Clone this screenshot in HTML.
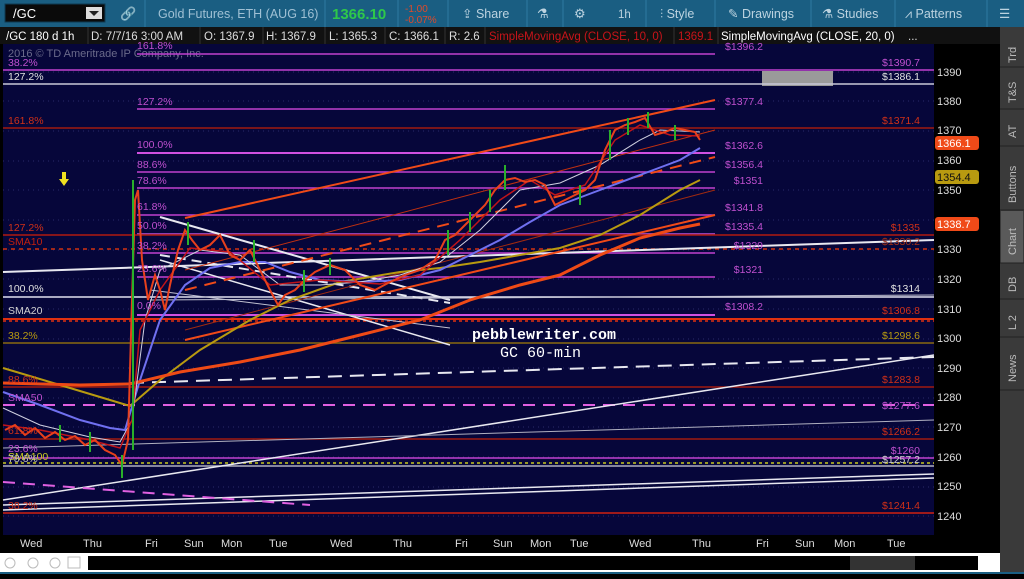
<!DOCTYPE html><html><head><style>
body{margin:0;width:1024px;height:574px;overflow:hidden;background:#000;font-family:"Liberation Sans",sans-serif}
svg text{font-family:"Liberation Sans",sans-serif}
</style></head><body>
<svg width="1024" height="574" xmlns="http://www.w3.org/2000/svg">
<!-- toolbar -->
<rect x="0" y="0" width="1024" height="27" fill="#1a5e82"/>
<rect x="5" y="4" width="100" height="18" fill="#0a0a0a" stroke="#0d3a52"/>
<text x="13" y="18" font-size="13" fill="#fff">/GC</text>
<rect x="86" y="7" width="16" height="12" fill="#ddd"/><path d="M89 11h10l-5 5z" fill="#222"/>
<text x="120" y="18" font-size="13" fill="#9fc0d4">🔗</text>
<g stroke="#2d7aa3"><line x1="145" y1="0" x2="145" y2="27"/><line x1="325" y1="0" x2="325" y2="27"/><line x1="398" y1="0" x2="398" y2="27"/><line x1="448" y1="0" x2="448" y2="27"/><line x1="527" y1="0" x2="527" y2="27"/><line x1="563" y1="0" x2="563" y2="27"/><line x1="646" y1="0" x2="646" y2="27"/><line x1="715" y1="0" x2="715" y2="27"/><line x1="811" y1="0" x2="811" y2="27"/><line x1="895" y1="0" x2="895" y2="27"/><line x1="987" y1="0" x2="987" y2="27"/></g>
<text x="158" y="18" font-size="12.5" fill="#9fc0d4">Gold Futures, ETH (AUG 16)</text>
<text x="332" y="19" font-size="15" font-weight="bold" fill="#2ec84a">1366.10</text>
<text x="405" y="12" font-size="10" fill="#e04a2a">-1.00</text>
<text x="405" y="23" font-size="10" fill="#e04a2a">-0.07%</text>
<text x="462" y="18" font-size="12.5" fill="#bcd3e0">⇪ Share</text>
<text x="537" y="18" font-size="13" fill="#bcd3e0">⚗</text>
<text x="574" y="18" font-size="13" fill="#bcd3e0">⚙</text>
<text x="618" y="18" font-size="11.5" fill="#bcd3e0">1h</text>
<text x="660" y="18" font-size="12.5" fill="#bcd3e0">⫶ Style</text>
<text x="728" y="18" font-size="12.5" fill="#bcd3e0">✎ Drawings</text>
<text x="822" y="18" font-size="12.5" fill="#bcd3e0">⚗ Studies</text>
<text x="905" y="18" font-size="12.5" fill="#bcd3e0">⩘ Patterns</text>
<text x="999" y="18" font-size="12.5" fill="#bcd3e0">☰</text>
<!-- info bar -->
<rect x="0" y="27" width="1024" height="17" fill="#111"/>
<g font-size="11.5" fill="#ddd">
<text x="6" y="40" fill="#fff">/GC 180 d 1h</text>
<text x="91" y="40">D: 7/7/16 3:00 AM</text>
<text x="204" y="40">O: 1367.9</text>
<text x="266" y="40">H: 1367.9</text>
<text x="329" y="40">L: 1365.3</text>
<text x="389" y="40">C: 1366.1</text>
<text x="449" y="40">R: 2.6</text>
<text x="489" y="40" fill="#c8141a">SimpleMovingAvg (CLOSE, 10, 0)</text>
<text x="678" y="40" fill="#c8141a">1369.1</text>
<text x="721" y="40" fill="#fff">SimpleMovingAvg (CLOSE, 20, 0)</text>
<text x="908" y="40">...</text>
</g>
<g stroke="#333"><line x1="88" y1="27" x2="88" y2="44"/><line x1="200" y1="27" x2="200" y2="44"/><line x1="263" y1="27" x2="263" y2="44"/><line x1="325" y1="27" x2="325" y2="44"/><line x1="385" y1="27" x2="385" y2="44"/><line x1="445" y1="27" x2="445" y2="44"/><line x1="485" y1="27" x2="485" y2="44"/><line x1="674" y1="27" x2="674" y2="44"/><line x1="718" y1="27" x2="718" y2="44"/></g>
<!-- side tabs -->
<rect x="1000" y="27" width="24" height="547" fill="#3a3a3a"/>
<rect x="1001" y="211" width="22" height="52" fill="#5a5a5a"/>
<g stroke="#222"><line x1="1000" y1="67" x2="1024" y2="67"/><line x1="1000" y1="109" x2="1024" y2="109"/><line x1="1000" y1="146" x2="1024" y2="146"/><line x1="1000" y1="210" x2="1024" y2="210"/><line x1="1000" y1="263" x2="1024" y2="263"/><line x1="1000" y1="299" x2="1024" y2="299"/><line x1="1000" y1="337" x2="1024" y2="337"/><line x1="1000" y1="390" x2="1024" y2="390"/></g>
<g font-size="11" fill="#bbb">
<text transform="translate(1016,63) rotate(-90)">Trd</text>
<text transform="translate(1016,103) rotate(-90)">T&amp;S</text>
<text transform="translate(1016,138) rotate(-90)">AT</text>
<text transform="translate(1016,203) rotate(-90)">Buttons</text>
<text transform="translate(1016,255) rotate(-90)">Chart</text>
<text transform="translate(1016,292) rotate(-90)">DB</text>
<text transform="translate(1016,330) rotate(-90)">L 2</text>
<text transform="translate(1016,382) rotate(-90)">News</text>
</g>
<!-- chart -->
<rect x="3" y="44" width="931" height="491" fill="#06063a"/>
<g stroke="#2a2a6a" stroke-dasharray="1,4"><line x1="3" y1="72" x2="934" y2="72"/><line x1="3" y1="101" x2="934" y2="101"/><line x1="3" y1="131" x2="934" y2="131"/><line x1="3" y1="161" x2="934" y2="161"/><line x1="3" y1="190" x2="934" y2="190"/><line x1="3" y1="220" x2="934" y2="220"/><line x1="3" y1="250" x2="934" y2="250"/><line x1="3" y1="279" x2="934" y2="279"/><line x1="3" y1="309" x2="934" y2="309"/><line x1="3" y1="339" x2="934" y2="339"/><line x1="3" y1="368" x2="934" y2="368"/><line x1="3" y1="398" x2="934" y2="398"/><line x1="3" y1="427" x2="934" y2="427"/><line x1="3" y1="457" x2="934" y2="457"/><line x1="3" y1="487" x2="934" y2="487"/><line x1="3" y1="516" x2="934" y2="516"/></g>
<text x="8" y="57" font-size="11" fill="#6a6a8a">2016 © TD Ameritrade IP Company, Inc.</text>
<rect x="762" y="71" width="71" height="15" fill="#9a9a9a"/>
<!-- horizontal levels -->
<g stroke-width="1.5">
<line x1="137" y1="54" x2="715" y2="54" stroke="#c040d0"/>
<line x1="3" y1="70" x2="934" y2="70" stroke="#c040d0"/>
<line x1="3" y1="84" x2="934" y2="84" stroke="#c8c8d8"/>
<line x1="137" y1="109" x2="715" y2="109" stroke="#c040d0"/>
<line x1="3" y1="128" x2="934" y2="128" stroke="#a01a10"/>
<line x1="137" y1="153" x2="715" y2="153" stroke="#d050e0" stroke-width="2"/>
<line x1="137" y1="172" x2="715" y2="172" stroke="#c040d0"/>
<line x1="137" y1="188" x2="715" y2="188" stroke="#c040d0"/>
<line x1="137" y1="215" x2="715" y2="215" stroke="#c040d0"/>
<line x1="137" y1="234" x2="715" y2="234" stroke="#9040b0" stroke-width="2"/>
<line x1="3" y1="235" x2="934" y2="235" stroke="#b01a10"/>
<line x1="3" y1="249" x2="934" y2="249" stroke="#d03010" stroke-dasharray="4,4"/>
<line x1="137" y1="253" x2="715" y2="253" stroke="#c040d0"/>
<line x1="137" y1="277" x2="715" y2="277" stroke="#c040d0"/>
<line x1="3" y1="297" x2="934" y2="297" stroke="#e0e0f0"/>
<line x1="137" y1="315" x2="715" y2="315" stroke="#d050e0" stroke-width="2"/>
<line x1="3" y1="319" x2="934" y2="319" stroke="#e03010" stroke-width="2"/>
<line x1="3" y1="321" x2="934" y2="321" stroke="#e03010" stroke-dasharray="3,3"/>
<line x1="3" y1="343" x2="934" y2="343" stroke="#8a6a10"/>
<line x1="3" y1="387" x2="934" y2="387" stroke="#a01a10"/>
<line x1="3" y1="405" x2="934" y2="405" stroke="#e060e0" stroke-dasharray="12,8" stroke-width="2"/>
<line x1="3" y1="439" x2="934" y2="439" stroke="#a01a10"/>
<line x1="3" y1="458" x2="934" y2="458" stroke="#c040d0"/>
<line x1="3" y1="463" x2="934" y2="463" stroke="#c8c820" stroke-dasharray="3,3"/>
<line x1="3" y1="466" x2="934" y2="466" stroke="#b0b0c0"/>
<line x1="3" y1="513" x2="934" y2="513" stroke="#d02010"/>
</g>
<!-- trendlines -->
<g fill="none">
<line x1="3" y1="272" x2="934" y2="240" stroke="#e8e8f0" stroke-width="2"/>
<line x1="3" y1="500" x2="934" y2="355" stroke="#e8e8f0" stroke-width="1.5"/>
<line x1="130" y1="383" x2="934" y2="357" stroke="#e8e8f0" stroke-width="2" stroke-dasharray="14,8"/>
<line x1="3" y1="510" x2="934" y2="478" stroke="#e8e8f0" stroke-width="1.5"/>
<line x1="3" y1="505" x2="934" y2="474" stroke="#e8e8f0" stroke-width="1.5"/>
<line x1="3" y1="448" x2="934" y2="420" stroke="#b0b0c0"/>
<line x1="3" y1="482" x2="310" y2="505" stroke="#e060e0" stroke-width="2" stroke-dasharray="12,8"/>
<line x1="160" y1="217" x2="450" y2="300" stroke="#e8e8f0" stroke-width="2"/>
<line x1="160" y1="260" x2="450" y2="345" stroke="#e8e8f0" stroke-width="1.5"/>
<line x1="160" y1="255" x2="450" y2="303" stroke="#e8e8f0" stroke-width="2" stroke-dasharray="10,6"/>
<line x1="150" y1="290" x2="450" y2="328" stroke="#c0c0d0"/>
<line x1="150" y1="300" x2="934" y2="295" stroke="#c0c0d0"/>
<line x1="185" y1="218" x2="715" y2="100" stroke="#f04a18" stroke-width="2"/>
<line x1="185" y1="270" x2="715" y2="130" stroke="#c03010"/>
<line x1="185" y1="290" x2="715" y2="157" stroke="#f04a18" stroke-width="2" stroke-dasharray="12,8"/>
<line x1="185" y1="340" x2="715" y2="215" stroke="#f04a18" stroke-width="2"/>
<line x1="185" y1="330" x2="715" y2="190" stroke="#a02a10"/>
</g>
<!-- MAs -->
<polyline fill="none" stroke="#b89a10" stroke-width="2" points="3,368 60,385 110,400 130,406 160,380 200,350 250,320 290,300 340,282 400,272 440,268 480,262 520,255 560,248 600,235 640,215 680,190 700,180"/>
<polyline fill="none" stroke="#7070f0" stroke-width="2" points="3,392 40,405 80,420 110,428 125,430 140,380 160,320 185,285 210,268 240,262 265,262 290,272 320,280 360,282 400,280 440,270 470,255 500,240 530,222 560,205 600,190 640,175 680,160 700,148"/>
<polyline fill="none" stroke="#ee4a16" stroke-width="3" points="3,383 80,385 130,384 180,372 240,362 300,350 360,335 420,320 470,300 520,285 560,275 600,255 640,238 680,228 700,224"/>
<polyline fill="none" stroke="#d0d0e0" stroke-width="1" points="3,408 40,425 90,437 120,442 132,420 145,320 160,270 200,250 240,255 280,285 320,285 360,282 400,275 440,262 480,230 520,190 560,183 600,165 640,140 660,130 700,132"/>
<polyline fill="none" stroke="#c0141a" stroke-width="1.5" points="3,425 40,430 90,440 120,448 132,420 140,330 160,290 190,248 230,252 270,285 320,280 380,284 420,275 460,240 500,200 530,180 555,195 585,185 615,140 640,125 670,135 700,136"/>
<!-- price -->
<polyline fill="none" stroke="#e8401c" stroke-width="2" points="5,430 15,425 25,435 35,428 45,438 55,432 65,440 75,436 85,445 95,440 105,450 115,455 122,465 128,440 132,300 135,200 138,190 142,260 148,300 155,275 160,290 165,310 170,285 178,250 185,230 192,240 200,250 210,245 220,235 230,255 240,260 250,250 260,270 270,290 278,305 285,295 295,290 305,280 315,272 330,265 345,270 360,285 375,290 390,282 405,275 420,270 435,260 445,240 455,235 465,225 475,215 485,205 495,190 505,180 515,178 525,182 535,180 545,185 555,205 565,200 575,195 585,190 595,180 605,150 615,130 625,125 635,122 645,118 655,135 665,132 675,128 685,130 695,132 700,140"/>
<g stroke="#2ab02a" stroke-width="2">
<line x1="133" y1="180" x2="133" y2="450"/><line x1="122" y1="455" x2="122" y2="478"/><line x1="188" y1="222" x2="188" y2="245"/><line x1="254" y1="240" x2="254" y2="262"/><line x1="304" y1="270" x2="304" y2="292"/><line x1="330" y1="258" x2="330" y2="275"/><line x1="448" y1="230" x2="448" y2="255"/><line x1="470" y1="212" x2="470" y2="232"/><line x1="490" y1="190" x2="490" y2="212"/><line x1="505" y1="165" x2="505" y2="190"/><line x1="580" y1="185" x2="580" y2="205"/><line x1="610" y1="130" x2="610" y2="160"/><line x1="628" y1="118" x2="628" y2="135"/><line x1="648" y1="112" x2="648" y2="128"/><line x1="675" y1="125" x2="675" y2="140"/><line x1="60" y1="425" x2="60" y2="442"/><line x1="90" y1="432" x2="90" y2="452"/></g>
<!-- yellow arrow -->
<path d="M62 172h4v7h3l-5 7-5-7h3z" fill="#f0e020"/>
<!-- labels -->
<g font-size="10.5">
<text x="8" y="66" fill="#c050d0">38.2%</text>
<text x="8" y="80" fill="#e0e0e0">127.2%</text>
<text x="8" y="124" fill="#d03018">161.8%</text>
<text x="8" y="231" fill="#d03018">127.2%</text>
<text x="8" y="245" fill="#c02010">SMA10</text>
<text x="8" y="292" fill="#e0e0e0">100.0%</text>
<text x="8" y="314" fill="#d0d0d0">SMA20</text>
<text x="8" y="339" fill="#b89a10">38.2%</text>
<text x="8" y="383" fill="#d03018">88.6%</text>
<text x="8" y="401" fill="#c050d0">SMA50</text>
<text x="8" y="434" fill="#d03018">61.8%</text>
<text x="8" y="452" fill="#c050d0">23.6%</text>
<text x="8" y="460" fill="#c8c820">SMA100</text>
<text x="8" y="462" fill="#c0c0c0">78.6%</text>
<text x="8" y="509" fill="#d03018">38.2%</text>
<g fill="#c050d0"><text x="137" y="49">161.8%</text><text x="137" y="105">127.2%</text><text x="137" y="148">100.0%</text><text x="137" y="168">88.6%</text><text x="137" y="184">78.6%</text><text x="137" y="210">61.8%</text><text x="137" y="229">50.0%</text><text x="137" y="249">38.2%</text><text x="137" y="272">23.6%</text><text x="137" y="309">0.0%</text></g>
<g fill="#c050d0" text-anchor="end"><text x="763" y="50">$1396.2</text><text x="763" y="105">$1377.4</text><text x="763" y="149">$1362.6</text><text x="763" y="168">$1356.4</text><text x="763" y="184">$1351</text><text x="763" y="211">$1341.8</text><text x="763" y="230">$1335.4</text><text x="763" y="249">$1329</text><text x="763" y="273">$1321</text><text x="763" y="310">$1308.2</text>
<text x="920" y="66">$1390.7</text><text x="920" y="409">$1277.6</text><text x="920" y="454">$1260</text></g>
<g text-anchor="end"><text x="920" y="80" fill="#e0e0e0">$1386.1</text><text x="920" y="124" fill="#d03018">$1371.4</text><text x="920" y="231" fill="#d03018">$1335</text><text x="920" y="245" fill="#a03018">$1330.2</text><text x="920" y="292" fill="#e0e0e0">$1314</text><text x="920" y="314" fill="#d03018">$1306.8</text><text x="920" y="339" fill="#b89a10">$1298.6</text><text x="920" y="383" fill="#d03018">$1283.8</text><text x="920" y="435" fill="#d03018">$1266.2</text><text x="920" y="463" fill="#d0d0d0">$1257.2</text><text x="920" y="509" fill="#d03018">$1241.4</text></g>
</g>
<text x="472" y="339" font-family="Liberation Mono" font-size="15" font-weight="bold" fill="#fff" style="font-family:'Liberation Mono',monospace">pebblewriter.com</text>
<text x="500" y="357" font-size="15" fill="#fff" style="font-family:'Liberation Mono',monospace">GC 60-min</text>
<!-- right axis -->
<g font-size="11" fill="#ddd">
<text x="937" y="76">1390</text><text x="937" y="105">1380</text><text x="937" y="134">1370</text><text x="937" y="164">1360</text><text x="937" y="194">1350</text><text x="937" y="253">1330</text><text x="937" y="283">1320</text><text x="937" y="313">1310</text><text x="937" y="342">1300</text><text x="937" y="372">1290</text><text x="937" y="401">1280</text><text x="937" y="431">1270</text><text x="937" y="461">1260</text><text x="937" y="490">1250</text><text x="937" y="520">1240</text>
</g>
<rect x="935" y="136" width="44" height="14" rx="3" fill="#f04a18"/><text x="937" y="147" font-size="11" fill="#fff">1366.1</text>
<rect x="935" y="170" width="44" height="14" rx="3" fill="#b89a10"/><text x="937" y="181" font-size="11" fill="#111">1354.4</text>
<rect x="935" y="217" width="44" height="14" rx="3" fill="#f04a18"/><text x="937" y="228" font-size="11" fill="#fff">1338.7</text>
<!-- bottom axis -->
<g font-size="11" fill="#ddd"><text x="20" y="547">Wed</text><text x="83" y="547">Thu</text><text x="145" y="547">Fri</text><text x="184" y="547">Sun</text><text x="221" y="547">Mon</text><text x="269" y="547">Tue</text><text x="330" y="547">Wed</text><text x="393" y="547">Thu</text><text x="455" y="547">Fri</text><text x="493" y="547">Sun</text><text x="530" y="547">Mon</text><text x="570" y="547">Tue</text><text x="629" y="547">Wed</text><text x="692" y="547">Thu</text><text x="756" y="547">Fri</text><text x="795" y="547">Sun</text><text x="834" y="547">Mon</text><text x="887" y="547">Tue</text></g>
<rect x="0" y="553" width="1000" height="19" fill="#fff"/>
<rect x="0" y="572" width="1024" height="2" fill="#1a5e82"/>
<rect x="88" y="556" width="890" height="14" fill="#000"/>
<rect x="850" y="556" width="65" height="14" fill="#333"/>
<g fill="none" stroke="#bbb"><circle cx="10" cy="563" r="5"/><circle cx="33" cy="563" r="5"/><circle cx="55" cy="563" r="5"/><rect x="68" y="557" width="12" height="11"/></g>
</svg>
</body></html>
